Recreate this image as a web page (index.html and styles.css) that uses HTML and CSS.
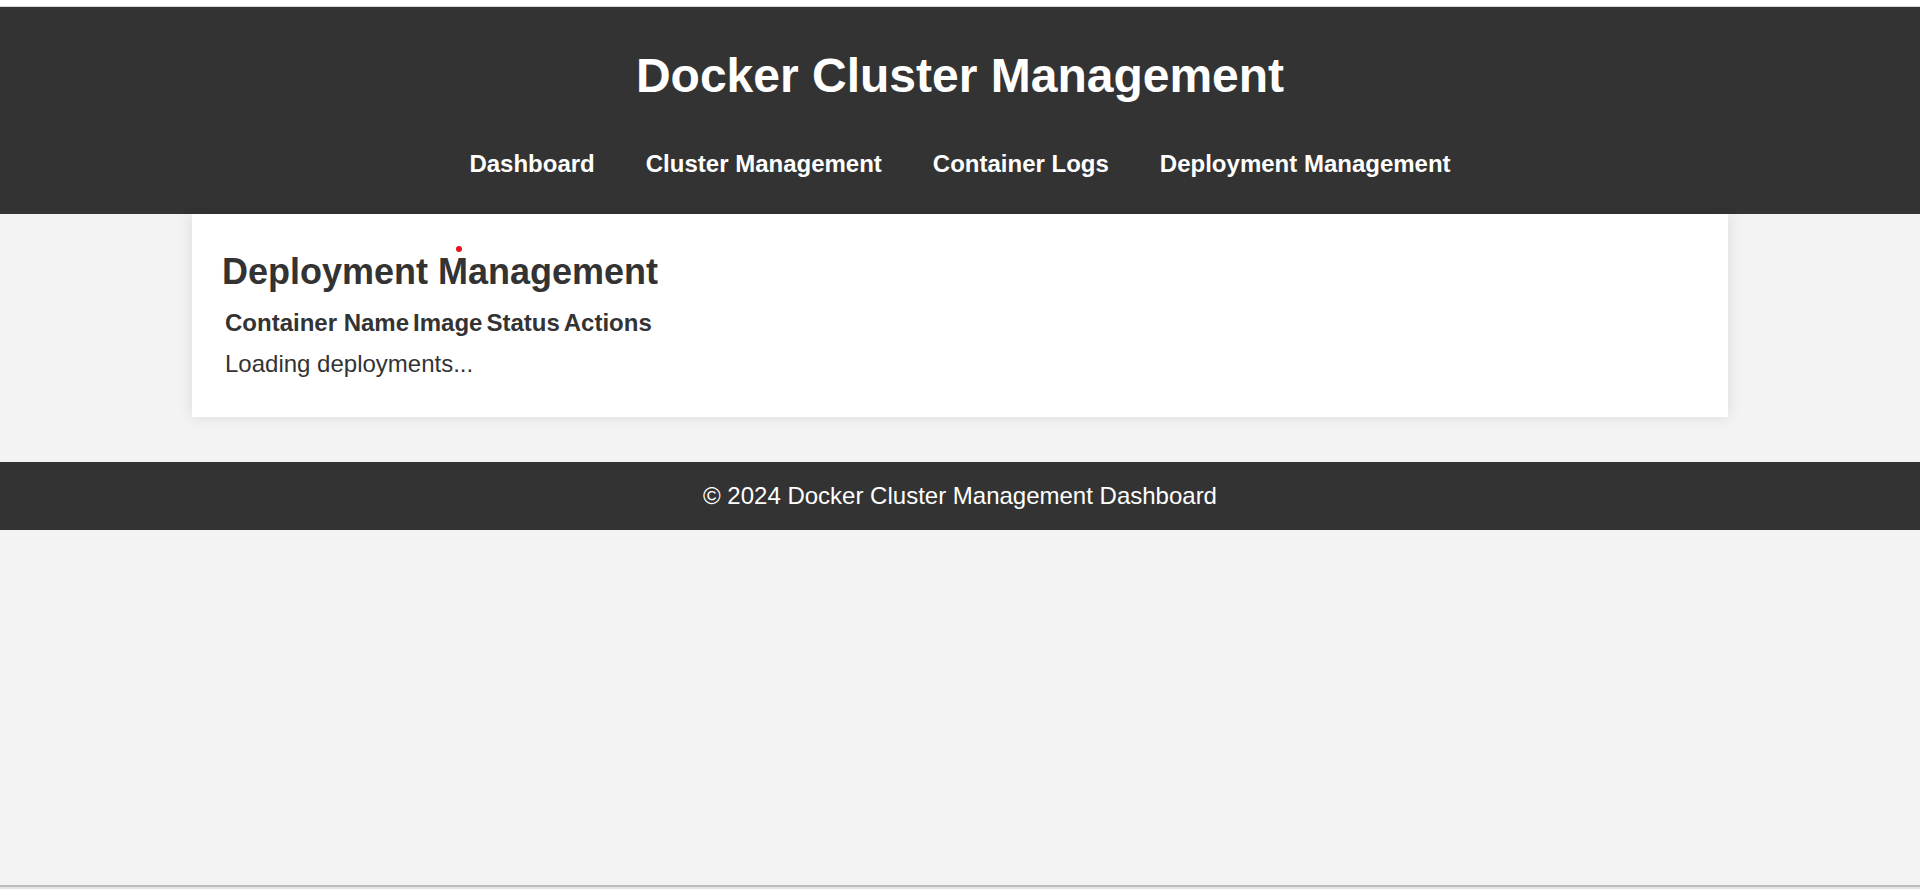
FILE: index.html
```html
<!DOCTYPE html>
<html lang="en">
<head>
<meta charset="utf-8">
<title>Docker Cluster Management</title>
<link rel="stylesheet" href="styles.css">
</head>
<body>
<div class="frame-top"></div>
<header class="site-header">
  <h1 class="site-title">Docker Cluster Management</h1>
  <nav class="site-nav">
    <a href="#" class="nav-link">Dashboard</a>
    <a href="#" class="nav-link">Cluster Management</a>
    <a href="#" class="nav-link">Container Logs</a>
    <a href="#" class="nav-link">Deployment Management</a>
  </nav>
</header>
<main class="card">
  <span class="cursor-dot"></span>
  <h2 class="card-title">Deployment Management</h2>
  <table class="deploy-table">
    <thead>
      <tr>
        <th>Container Name</th>
        <th>Image</th>
        <th>Status</th>
        <th>Actions</th>
      </tr>
    </thead>
    <tbody>
      <tr>
        <td colspan="4" class="loading">Loading deployments...</td>
      </tr>
    </tbody>
  </table>
</main>
<footer class="site-footer">© 2024 Docker Cluster Management Dashboard</footer>
<div class="spacer"></div>
<div class="frame-bottom"></div>
</body>
</html>
```

FILE: styles.css
```css
html {
  background: #f3f3f3;
}

body {
  margin: 0;
  min-height: 100vh;
  display: flex;
  flex-direction: column;
  font-family: "Liberation Sans", Arial, sans-serif;
  font-size: 24px;
  color: #333;
  background: #f3f3f3;
}

.frame-top {
  height: 6px;
  background: #fdfdfd;
  border-bottom: 1px solid #d6d6d6;
  flex: none;
}

.site-header {
  background: #333;
  color: #fff;
  text-align: center;
  padding: 41px 0 36px;
  flex: none;
}

.site-title {
  margin: 0 0 47px;
  font-size: 48px;
  font-weight: bold;
}

.site-nav {
  display: flex;
  justify-content: center;
  gap: 51px;
}

.nav-link {
  color: #fff;
  text-decoration: none;
  font-weight: bold;
  font-size: 24px;
}

.card {
  position: relative;
  width: 80%;
  margin: 0 auto 45px;
  box-sizing: border-box;
  background: #fff;
  padding: 37px 30px 27px;
  box-shadow: 0 0 14px rgba(0, 0, 0, 0.1);
  flex: none;
}

.cursor-dot {
  position: absolute;
  left: 264px;
  top: 32px;
  width: 6px;
  height: 6px;
  border-radius: 50%;
  background: #e8141b;
}

.card-title {
  margin: 0 0 13px;
  font-size: 36px;
  font-weight: bold;
  color: #333;
}

.deploy-table {
  border-spacing: 2px;
  font-size: 24px;
  color: #333;
}

.deploy-table th {
  padding: 1px;
  text-align: left;
  font-weight: bold;
}

.deploy-table td {
  padding: 10px 1px;
}

.site-footer {
  background: #333;
  color: #fff;
  text-align: center;
  padding: 20px 0;
  font-size: 24px;
  flex: none;
}

.spacer {
  flex: 1;
}

.frame-bottom {
  height: 2px;
  background: #bbb;
  border-bottom: 2px solid #e4e4e4;
  flex: none;
}
```
